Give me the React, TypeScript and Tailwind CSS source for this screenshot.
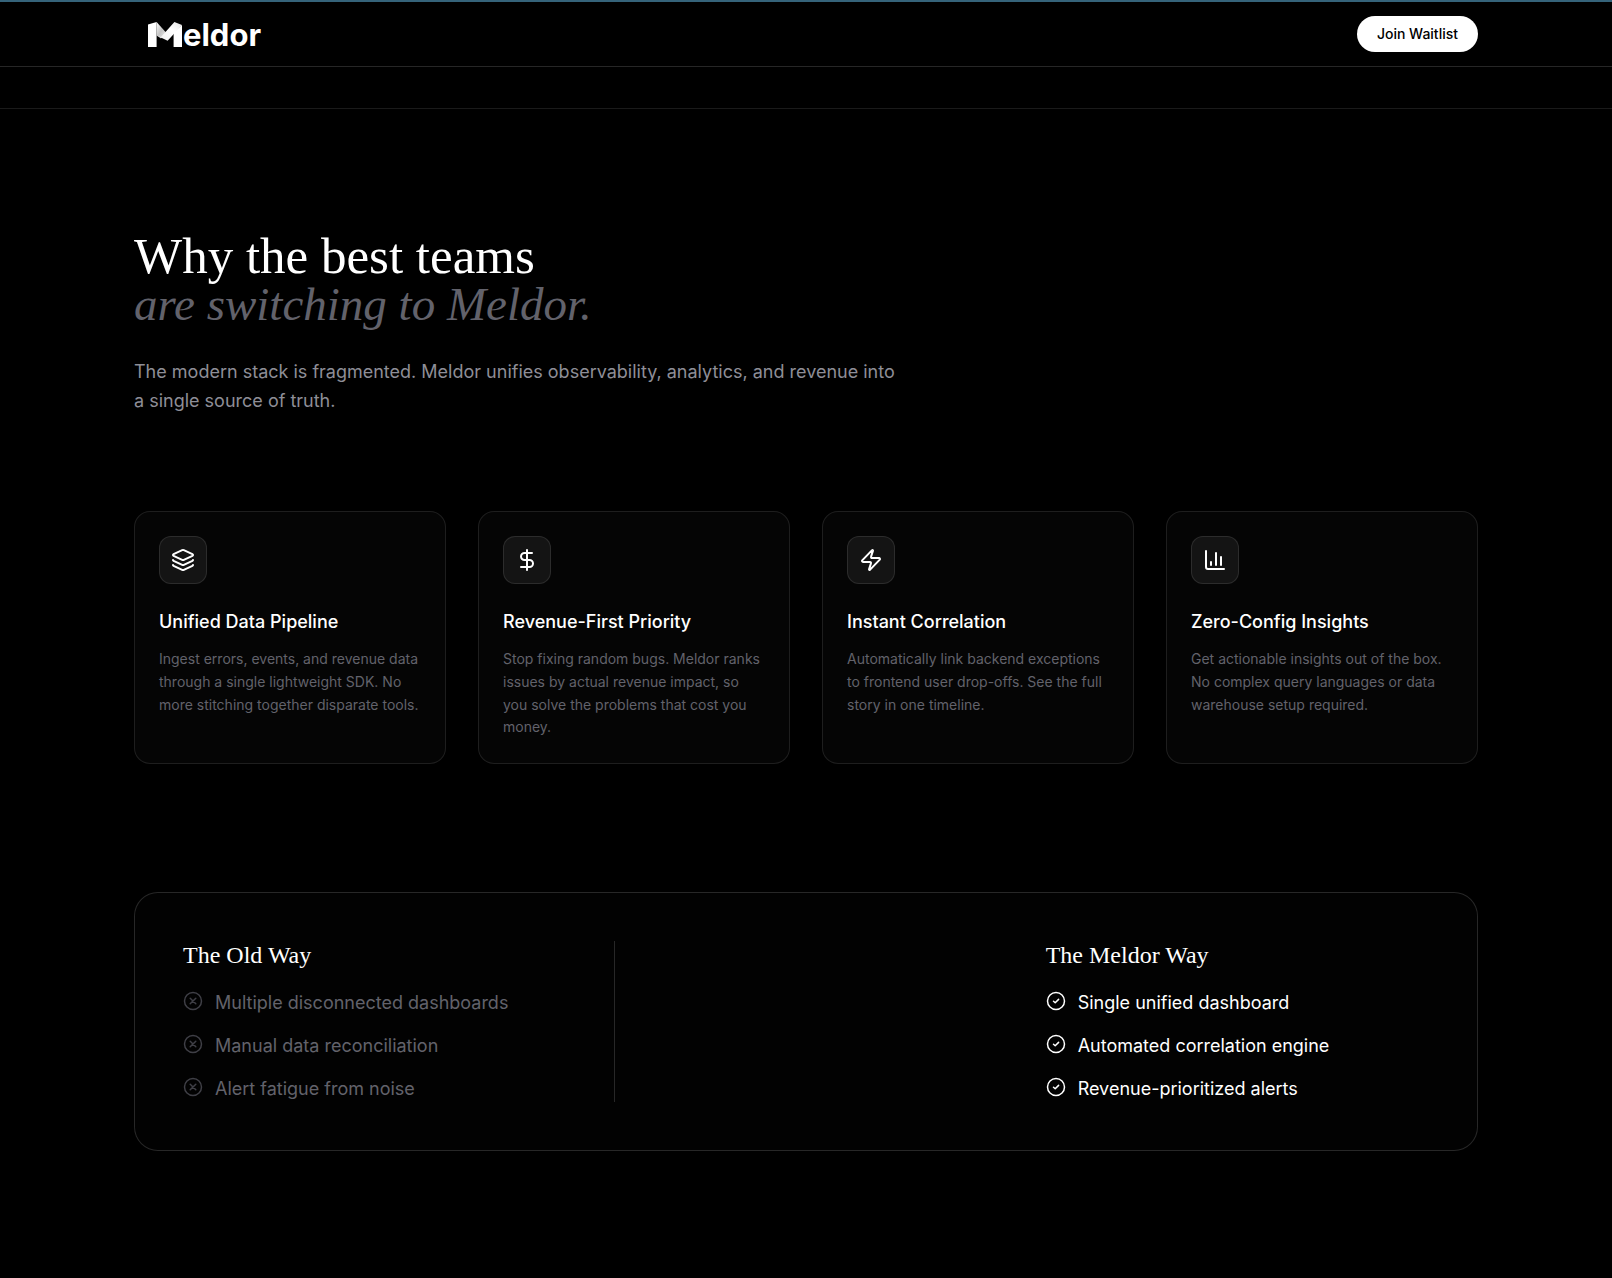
import React from 'react';

import { DollarSign, Layers, Zap } from 'lucide-react';

interface Feature {
  icon: React.ComponentType<{ className?: string }>;
  title: string;
  description: string;
}

// Axis with three bars of different heights
const BarsIcon: React.FC<{ className?: string }> = ({ className }) => (
  <svg
    viewBox="0 0 24 24"
    fill="none"
    stroke="currentColor"
    strokeWidth="2"
    strokeLinecap="round"
    strokeLinejoin="round"
    className={className}
    aria-hidden="true"
  >
    <path d="M3 3v16a2 2 0 0 0 2 2h16" />
    <path d="M18 17V9" />
    <path d="M13 17V5" />
    <path d="M8 17v-3" />
  </svg>
);

const FEATURES: Feature[] = [
  {
    icon: Layers,
    title: 'Unified Data Pipeline',
    description:
      'Ingest errors, events, and revenue data through a single lightweight SDK. No more stitching together disparate tools.',
  },
  {
    icon: DollarSign,
    title: 'Revenue-First Priority',
    description:
      'Stop fixing random bugs. Meldor ranks issues by actual revenue impact, so you solve the problems that cost you money.',
  },
  {
    icon: Zap,
    title: 'Instant Correlation',
    description:
      'Automatically link backend exceptions to frontend user drop-offs. See the full story in one timeline.',
  },
  {
    icon: BarsIcon,
    title: 'Zero-Config Insights',
    description:
      'Get actionable insights out of the box. No complex query languages or data warehouse setup required.',
  },
];

const OLD_WAY = ['Multiple disconnected dashboards', 'Manual data reconciliation', 'Alert fatigue from noise'];
const MELDOR_WAY = ['Single unified dashboard', 'Automated correlation engine', 'Revenue-prioritized alerts'];

// Folded ribbon mark followed by the rest of the name
const Logo: React.FC = () => (
  <a href="#" aria-label="Meldor" className="flex items-end gap-px ml-3.5">
    <svg viewBox="0 0 34 25" className="w-[34px] h-[25px]" aria-hidden="true">
      <defs>
        <linearGradient id="fold-left" x1="0" y1="0" x2="1" y2="1">
          <stop offset="0" stopColor="#fff" />
          <stop offset="0.5" stopColor="#c4c4c4" />
          <stop offset="1" stopColor="#ededed" />
        </linearGradient>
        <linearGradient id="fold-right" x1="1" y1="0" x2="0" y2="1">
          <stop offset="0" stopColor="#e2e2e2" />
          <stop offset="0.4" stopColor="#fff" />
          <stop offset="1" stopColor="#f0f0f0" />
        </linearGradient>
      </defs>
      <path d="M0 2.6 8.6 0v25H0z" fill="#fff" />
      <path d="M25.6 10 34 3v22h-8.4z" fill="#fff" />
      <path d="M8.6 0 18 10.4 13 16.4 8.6 13.6z" fill="url(#fold-left)" />
      <path d="M26.4 0 34 3 19.6 18.8 8.6 13.4 13 15z" fill="url(#fold-right)" />
    </svg>
    <span className="text-[31px] leading-6 font-bold">eldor</span>
  </a>
);

const Header: React.FC = () => (
  <header className="border-b border-white/15">
    <div className="h-0.5 bg-[#35637a]" />
    <div className="max-w-[1440px] mx-auto px-12 h-16 flex items-center justify-between">
      <Logo />
      <button type="button" className="h-9 px-5 rounded-full bg-white text-black text-sm font-medium">
        Join Waitlist
      </button>
    </div>
  </header>
);

const FeatureCard: React.FC<{ feature: Feature }> = ({ feature }) => {
  const Icon = feature.icon;
  return (
    <article className="p-6 rounded-2xl border border-white/10 bg-[#050505]">
      <div className="w-12 h-12 mb-6 flex items-center justify-center rounded-xl border border-white/10 bg-[#141414]">
        <Icon className="w-6 h-6" />
      </div>
      <h3 className="mb-3 text-lg leading-7 font-medium">{feature.title}</h3>
      <p className="text-sm leading-relaxed text-[#62626b]">{feature.description}</p>
    </article>
  );
};

interface ComparisonListProps {
  title: string;
  items: string[];
  positive?: boolean;
}

const ComparisonList: React.FC<ComparisonListProps> = ({ title, items, positive }) => (
  <div>
    <h3 className="mb-5 font-['Liberation_Serif',serif] text-2xl leading-7">{title}</h3>
    <ul className="space-y-4">
      {items.map((item) => (
        <li
          key={item}
          className={`flex items-start gap-3 text-lg leading-[27px] ${positive ? 'text-white' : 'text-[#62626b]'}`}
        >
          <svg
            viewBox="0 0 20 20"
            fill="none"
            stroke="currentColor"
            strokeWidth="1.5"
            strokeLinecap="round"
            strokeLinejoin="round"
            className={`w-5 h-5 mt-0.5 shrink-0 ${positive ? 'text-white' : 'text-[#3f3f46]'}`}
            aria-hidden="true"
          >
            <circle cx="10" cy="10" r="8.5" />
            {positive ? <path d="M7.5 10.3 9.2 11.8 12.6 8.4" /> : <path d="M7.2 7.2l5.6 5.6M12.8 7.2l-5.6 5.6" />}
          </svg>
          <span>{item}</span>
        </li>
      ))}
    </ul>
  </div>
);

export default function App() {
  return (
    <div className="min-h-screen bg-black text-white font-['Inter',sans-serif]">
      <Header />
      <main>
        <div className="h-[42px] border-b border-white/10" />
        <section className="max-w-[1440px] mx-auto px-12 pt-[123px] pb-[127px]">
          <h2 className="mb-[29px] font-['Liberation_Serif',serif] text-[51px] leading-12">
            Why the best teams
            <span className="block text-[47px] leading-12 italic text-[#62626b]">are switching to Meldor.</span>
          </h2>
          <p className="max-w-3xl mb-24 text-lg leading-[29px] text-[#8e8e97]">
            The modern stack is fragmented. Meldor unifies observability, analytics, and revenue into a single source of
            truth.
          </p>

          <div className="grid grid-cols-4 gap-8 mb-32">
            {FEATURES.map((feature) => (
              <FeatureCard key={feature.title} feature={feature} />
            ))}
          </div>

          <div className="grid grid-cols-3 gap-12 p-12 rounded-3xl border border-white/15 bg-[#020202]">
            <ComparisonList title="The Old Way" items={OLD_WAY} />
            <div className="w-px bg-white/15" />
            <ComparisonList title="The Meldor Way" items={MELDOR_WAY} positive />
          </div>
        </section>
      </main>
    </div>
  );
}
